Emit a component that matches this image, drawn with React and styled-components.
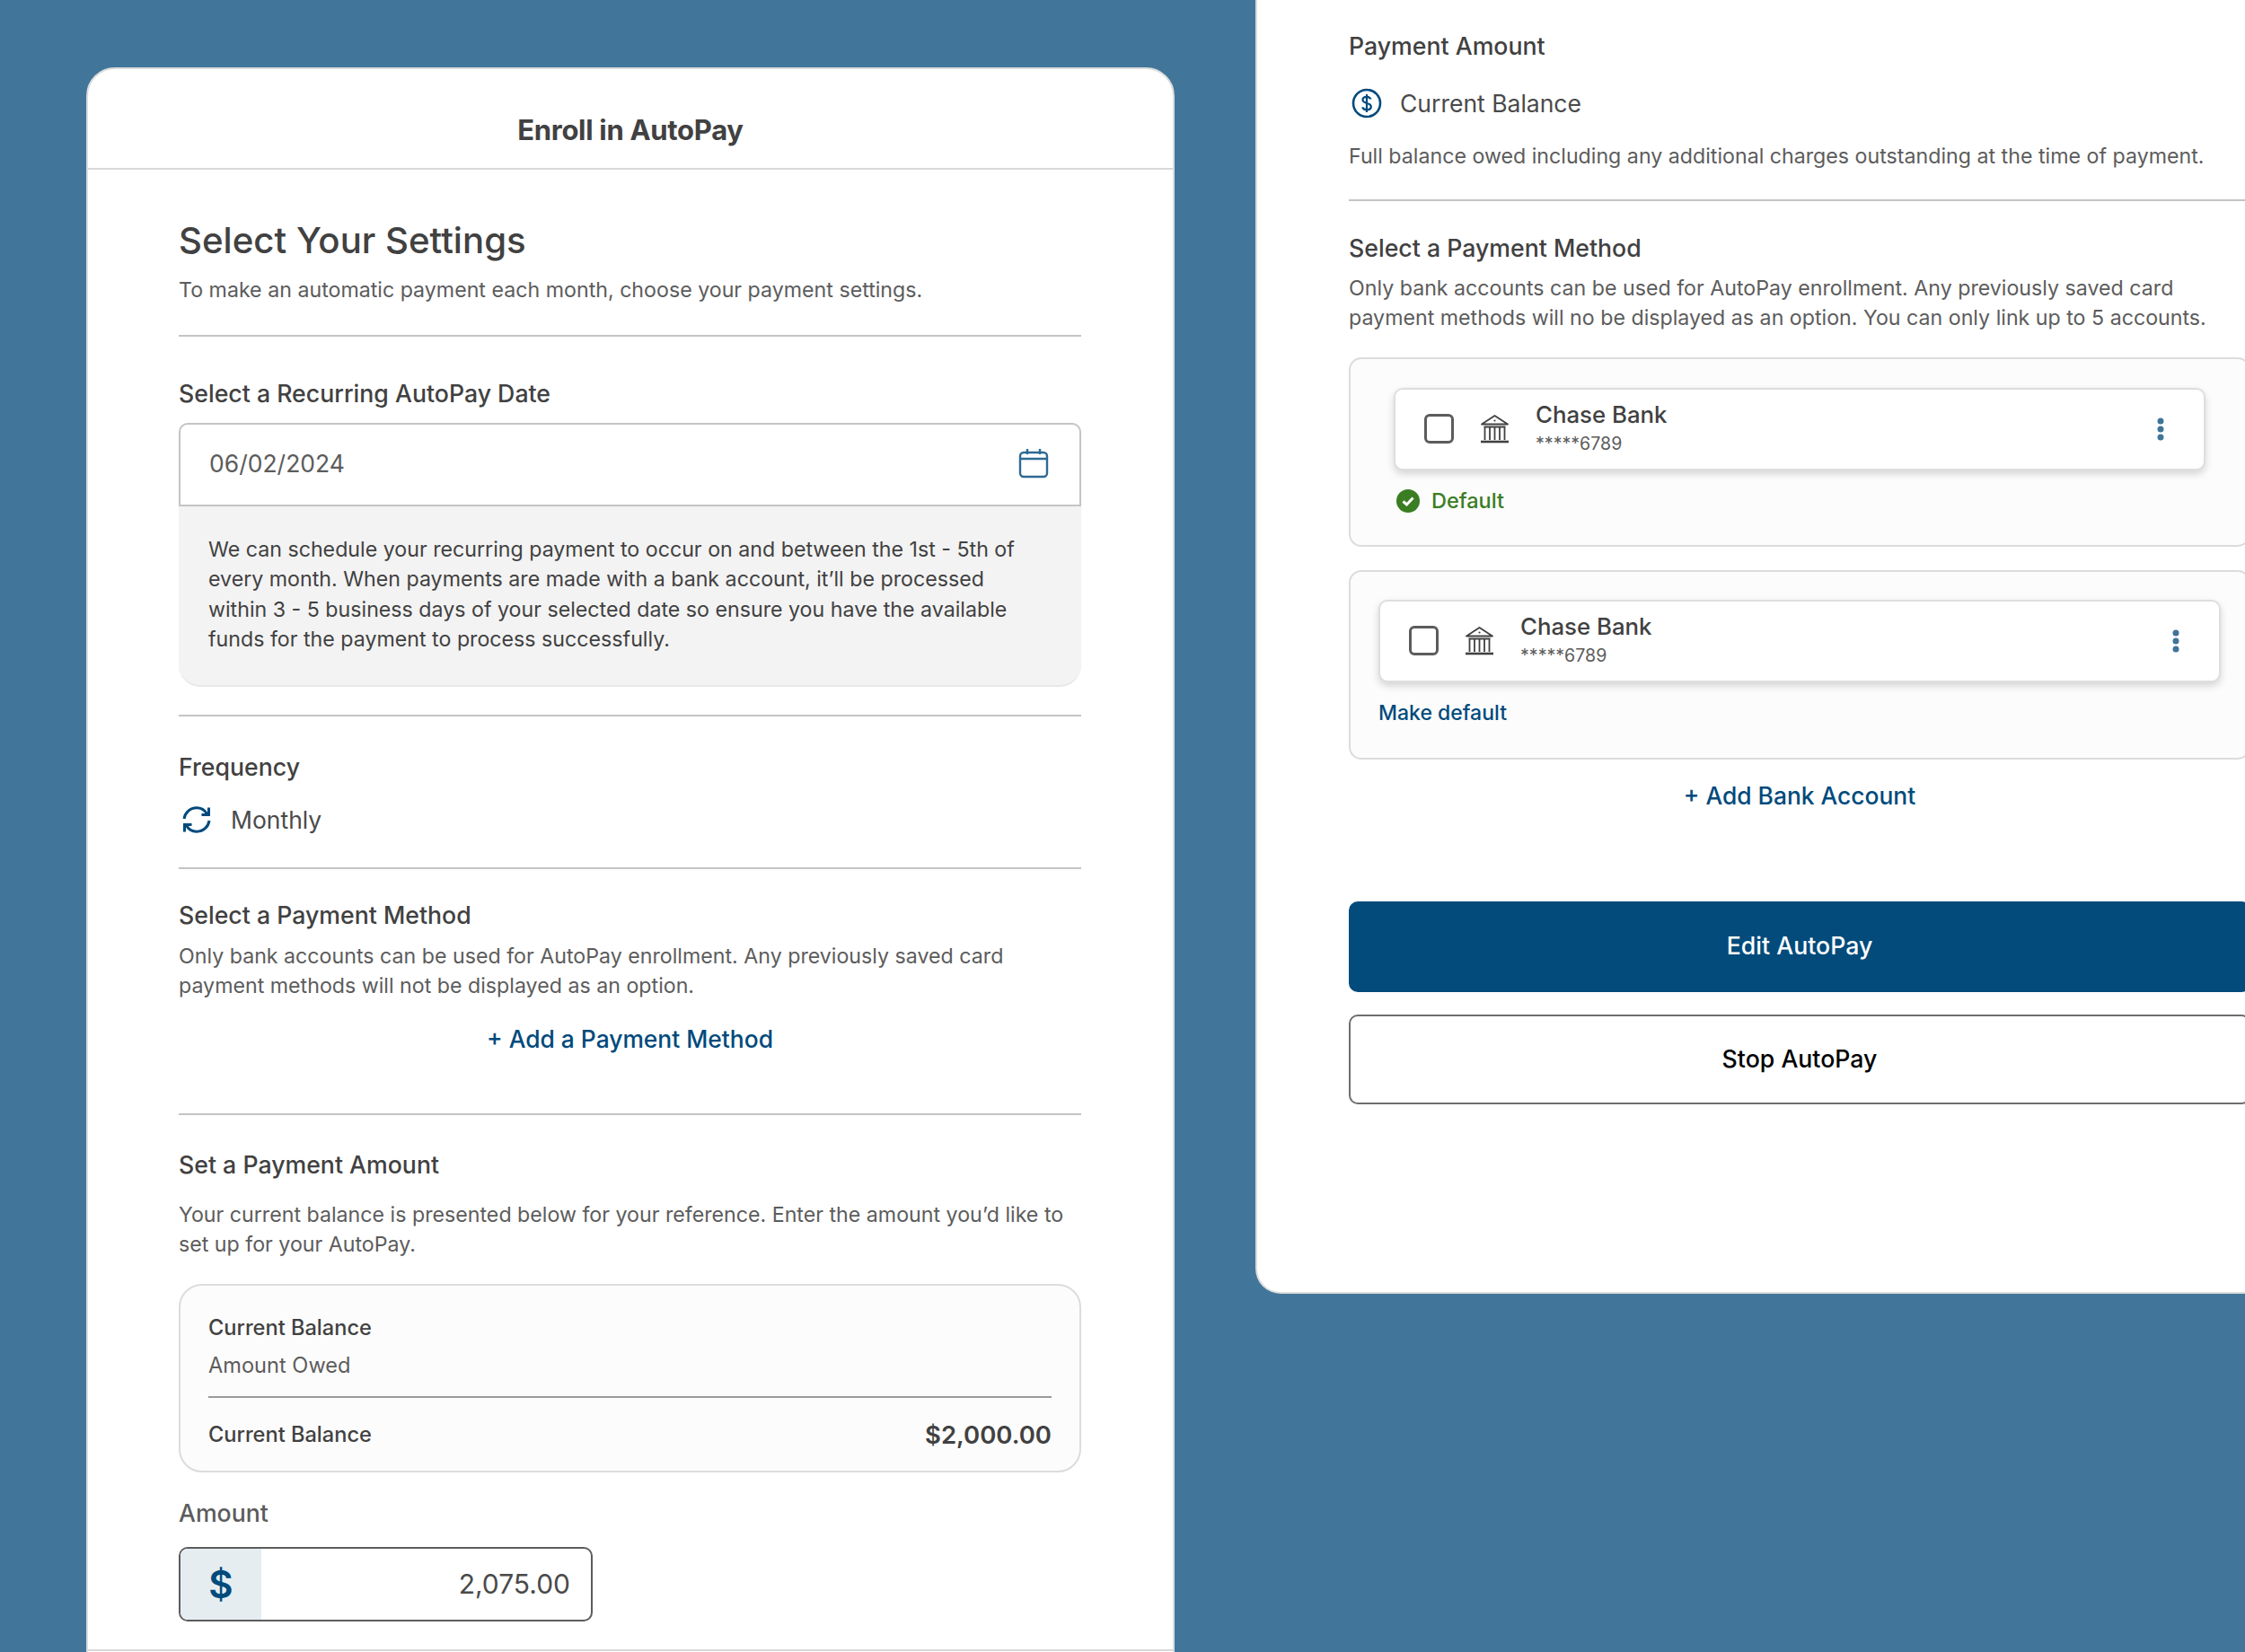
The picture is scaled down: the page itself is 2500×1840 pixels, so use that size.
import React from "react";
import styled, { createGlobalStyle } from "styled-components";

const GlobalStyle = createGlobalStyle`
  html, body {
    margin: 0;
    padding: 0;
    background: #41769a;
  }
  * {
    box-sizing: border-box;
  }
`;

const Page = styled.div`
  display: flex;
  align-items: flex-start;
  width: 2500px;
  height: 1840px;
  padding-left: 96px;
  overflow: hidden;
  background: #41769a;
  font-family: Inter, "Liberation Sans", sans-serif;
  color: #414141;
`;

const Card = styled.section`
  flex: none;
  width: 1212px;
  height: 1900px;
  margin-top: 75px;
  background: #fff;
  border: 2px solid #dcdcdc;
  border-radius: 32px 32px 0 0;
`;

const CardHeader = styled.header`
  display: flex;
  align-items: center;
  justify-content: center;
  height: 112px;
  padding-top: 24px;
  border-bottom: 2px solid #d8d8d8;
  font-size: 31px;
  font-weight: 700;
  letter-spacing: -0.3px;
`;

const CardBody = styled.div`
  padding: 53px 102px 0 101px;
`;

const Heading = styled.h1`
  margin: 0;
  font-size: 40.2px;
  line-height: 52px;
  font-weight: 500;
`;

const Label = styled.h2`
  margin: ${(p) => p.$top || 0}px 0 0;
  padding-bottom: 1px;
  font-size: 26.7px;
  line-height: 33px;
  font-weight: 500;
`;

const Body = styled.p`
  margin: ${(p) => p.$top || 0}px 0 0;
  font-size: 23.2px;
  line-height: 33.5px;
  color: #5c5c5c;
`;

const Rule = styled.hr`
  height: 2px;
  margin: ${(p) => p.$top || 0}px 0 0;
  border: 0;
  background: #c4c4c4;
`;

const FooterRule = styled(Rule)`
  margin-left: -101px;
  margin-right: -102px;
  background: #d8d8d8;
`;

const DateField = styled.div`
  display: flex;
  align-items: center;
  justify-content: space-between;
  height: 93px;
  margin-top: 15px;
  padding: 0 34px 2px 32px;
  border: 2px solid #c4c4c4;
  border-radius: 10px 10px 0 0;
  font-size: 26.5px;
  color: #5c5c5c;
`;

const Hint = styled.div`
  height: 201px;
  padding: 32px 60px 0 33px;
  background: #f3f3f3;
  border-radius: 0 0 24px 24px;
  border-bottom: 2px solid #e8e8e8;
  font-size: 23.2px;
  line-height: 33.5px;
  color: #414141;
`;

const IconRow = styled.div`
  display: flex;
  align-items: center;
  gap: ${(p) => p.$gap}px;
  height: 36px;
  margin-top: ${(p) => p.$top || 0}px;
  padding-left: ${(p) => p.$inset}px;
  font-size: 26.5px;
  color: #4a4a4a;
`;

const TextLink = styled.a`
  display: block;
  margin-top: ${(p) => p.$top || 0}px;
  font-size: 26.4px;
  line-height: 36px;
  font-weight: 500;
  text-align: center;
  color: #004a7c;
`;

const BalanceBox = styled.div`
  height: 210px;
  margin-top: 26px;
  padding: 32px 31px 0;
  background: #fcfcfc;
  border: 2px solid #dcdcdc;
  border-radius: 26px;
`;

const BalanceRow = styled.div`
  display: flex;
  align-items: center;
  justify-content: space-between;
  height: 30px;
  margin-top: ${(p) => p.$top || 0}px;
  font-size: 23.6px;
  font-weight: ${(p) => (p.$muted ? 400 : 500)};
  color: ${(p) => (p.$muted ? "#5c5c5c" : "#414141")};
`;

const BalanceValue = styled.span`
  font-size: 27.5px;
  font-weight: 600;
`;

const BalanceRule = styled(Rule)`
  background: #9a9a9a;
`;

const AmountLabel = styled(Label)`
  color: #5c5c5c;
`;

const AmountField = styled.div`
  display: flex;
  width: 461px;
  height: 83px;
  margin-top: 20px;
  overflow: hidden;
  border: 2px solid #5c5c5c;
  border-radius: 10px;
`;

const AmountPrefix = styled.span`
  display: flex;
  align-items: center;
  justify-content: center;
  flex: none;
  width: 90px;
  background: #e5edf1;
  font-size: 42px;
  font-weight: 600;
  color: #004a7c;
`;

const AmountValue = styled.span`
  display: flex;
  align-items: center;
  justify-content: flex-end;
  flex: 1;
  padding-right: 23px;
  font-size: 30px;
  color: #4a4a4a;
`;

const Panel = styled.section`
  flex: none;
  width: 1220px;
  height: 1441px;
  margin-left: 90px;
  padding: 35px 0 0 102px;
  background: #fff;
  border-left: 2px solid #dcdcdc;
  border-bottom: 2px solid #dcdcdc;
  border-bottom-left-radius: 28px;
`;

const PanelInner = styled.div`
  width: 1004px;
`;

const AccountBox = styled.div`
  height: 211px;
  margin-top: ${(p) => p.$top}px;
  padding: ${(p) => p.$topPad}px ${(p) => p.$inset}px 0;
  background: #fcfcfc;
  border: 2px solid #dcdcdc;
  border-radius: 14px;
`;

const AccountCard = styled.div`
  display: flex;
  align-items: center;
  height: 92px;
  padding: 0 44px 0 32px;
  background: #fff;
  border: 2px solid #dedede;
  border-radius: 10px;
  box-shadow: 0 4px 8px rgba(0, 0, 0, 0.16);
`;

const Checkbox = styled.span`
  flex: none;
  width: 33px;
  height: 33px;
  border: 3px solid #5c5c5c;
  border-radius: 6px;
`;

const BankLogo = styled.svg`
  flex: none;
  margin-left: 29px;
`;

const BankInfo = styled.div`
  flex: 1;
  margin-left: 29px;
  padding-bottom: 3px;
`;

const BankName = styled.div`
  font-size: 25.8px;
  line-height: 34px;
  font-weight: 500;
  color: #414141;
`;

const BankNumber = styled.div`
  margin-top: 1px;
  font-size: 19.6px;
  line-height: 28px;
  color: #5c5c5c;
`;

const DefaultTag = styled.div`
  display: flex;
  align-items: center;
  gap: 13px;
  margin: 21px 0 0 3px;
  font-size: 23.5px;
  line-height: 26px;
  font-weight: 500;
  color: #3a7d23;
`;

const MakeDefault = styled.a`
  display: block;
  margin-top: 21px;
  font-size: 23px;
  line-height: 26px;
  font-weight: 500;
  color: #004a7c;
`;

const Button = styled.button`
  display: block;
  width: 100%;
  height: ${(p) => p.$height}px;
  margin-top: ${(p) => p.$top}px;
  padding: 0 0 2px;
  background: ${(p) => (p.$primary ? "#024b7b" : "#fff")};
  border: ${(p) => (p.$primary ? "0" : "2px solid #6e6e6e")};
  border-radius: 10px;
  font-family: inherit;
  font-size: 26.7px;
  font-weight: 500;
  color: ${(p) => (p.$primary ? "#fff" : "#000")};
`;

const CalendarIcon = () => (
  <svg width="34" height="34" viewBox="0 0 34 34" fill="none" stroke="#2f6a94" strokeWidth="2.4">
    <rect x="2" y="5" width="30" height="27" rx="4" />
    <path d="M2 12h30M10 1v6M24 1v6" />
  </svg>
);

const RefreshIcon = () => (
  <svg width="32" height="30" viewBox="0 0 32 30" fill="none" stroke="#004a7c" strokeWidth="3">
    <path d="M2 14C3 7 8.5 1.8 16 1.8c5 0 9 2.500 11.500 6.700" />
    <path d="M29.500 1.500v8h-8" />
    <path d="M30 16c-1 7-6.500 12.200-14 12.200-5 0-9-2.500-11.500-6.700" />
    <path d="M2.500 28.500v-8h8" />
  </svg>
);

const DollarIcon = () => (
  <svg width="34" height="34" viewBox="0 0 34 34" fill="none" stroke="#004a7c" strokeWidth="2.6">
    <circle cx="17" cy="17" r="15" />
    <path d="M21.500 12.500c-.6-1.700-2.400-2.700-4.500-2.700-2.600 0-4.500 1.400-4.500 3.500 0 4.700 9.300 2.600 9.300 7.400 0 2.100-2 3.500-4.800 3.500-2.300 0-4.200-1-4.800-2.900M17 7v20" strokeWidth="2.200" />
  </svg>
);

const BankIcon = () => (
  <BankLogo width="33" height="33" viewBox="0 0 33 33" fill="none" stroke="#414141" strokeWidth="1.8">
    <path d="M2 11.500L16.500 2 31 11.500H2z" strokeLinejoin="round" />
    <circle cx="16.500" cy="7.500" r="1.100" fill="#414141" stroke="none" />
    <path d="M4.500 14.500h24M5.500 14.500V29M11 14.500V29M16.500 14.500V29M22 14.500V29M27.500 14.500V29" />
    <path d="M1 31h31" strokeWidth="2.600" />
  </BankLogo>
);

const KebabIcon = () => (
  <svg width="8" height="26" viewBox="0 0 8 26" fill="#3f749a">
    <circle cx="4" cy="4" r="3.500" />
    <circle cx="4" cy="13" r="3.500" />
    <circle cx="4" cy="22" r="3.500" />
  </svg>
);

const CheckIcon = () => (
  <svg width="26" height="26" viewBox="0 0 26 26">
    <circle cx="13" cy="13" r="13" fill="#3a7d23" />
    <path d="M7.500 13.500l4 3.500 7-7.500" fill="none" stroke="#fff" strokeWidth="3" />
  </svg>
);

const Account = () => (
  <AccountCard>
    <Checkbox />
    <BankIcon />
    <BankInfo>
      <BankName>Chase Bank</BankName>
      <BankNumber>*****6789</BankNumber>
    </BankInfo>
    <KebabIcon />
  </AccountCard>
);

const App = () => (
  <Page>
    <GlobalStyle />
    <Card>
      <CardHeader>Enroll in AutoPay</CardHeader>
      <CardBody>
        <Heading>Select Your Settings</Heading>
        <Body $top={13}>To make an automatic payment each month, choose your payment settings.</Body>
        <Rule $top={32} />

        <Label $top={47}>Select a Recurring AutoPay Date</Label>
        <DateField>
          06/02/2024
          <CalendarIcon />
        </DateField>
        <Hint>
          We can schedule your recurring payment to occur on and between the 1st - 5th of every month. When payments are
          made with a bank account, it’ll be processed within 3 - 5 business days of your selected date so ensure you
          have the available funds for the payment to process successfully.
        </Hint>
        <Rule $top={31} />

        <Label $top={40}>Frequency</Label>
        <IconRow $top={23} $inset={4} $gap={22}>
          <RefreshIcon />
          Monthly
        </IconRow>
        <Rule $top={35} />

        <Label $top={35}>Select a Payment Method</Label>
        <Body $top={12}>
          Only bank accounts can be used for AutoPay enrollment. Any previously saved card payment methods will not be
          displayed as an option.
        </Body>
        <TextLink $top={23}>+ Add a Payment Method</TextLink>
        <Rule $top={65} />

        <Label $top={39}>Set a Payment Amount</Label>
        <Body $top={22}>
          Your current balance is presented below for your reference. Enter the amount you’d like to set up for your
          AutoPay.
        </Body>
        <BalanceBox>
          <BalanceRow>Current Balance</BalanceRow>
          <BalanceRow $top={12} $muted>
            Amount Owed
          </BalanceRow>
          <BalanceRule $top={19} />
          <BalanceRow $top={26}>
            Current Balance
            <BalanceValue>$2,000.00</BalanceValue>
          </BalanceRow>
        </BalanceBox>
        <AmountLabel $top={29}>Amount</AmountLabel>
        <AmountField>
          <AmountPrefix>$</AmountPrefix>
          <AmountValue>2,075.00</AmountValue>
        </AmountField>
        <FooterRule $top={31} />
      </CardBody>
    </Card>

    <Panel>
      <PanelInner>
        <Label>Payment Amount</Label>
        <IconRow $top={28} $inset={3} $gap={20}>
          <DollarIcon />
          Current Balance
        </IconRow>
        <Body $top={25}>Full balance owed including any additional charges outstanding at the time of payment.</Body>
        <Rule $top={30} />

        <Label $top={36}>Select a Payment Method</Label>
        <Body $top={11}>
          Only bank accounts can be used for AutoPay enrollment. Any previously saved card payment methods will no be
          displayed as an option. You can only link up to 5 accounts.
        </Body>

        <AccountBox $top={26} $topPad={32} $inset={48}>
          <Account />
          <DefaultTag>
            <CheckIcon />
            Default
          </DefaultTag>
        </AccountBox>
        <AccountBox $top={26} $topPad={31} $inset={31}>
          <Account />
          <MakeDefault>Make default</MakeDefault>
        </AccountBox>

        <TextLink $top={22}>+ Add Bank Account</TextLink>
        <Button $primary $top={100} $height={101}>
          Edit AutoPay
        </Button>
        <Button $top={25} $height={100}>
          Stop AutoPay
        </Button>
      </PanelInner>
    </Panel>
  </Page>
);

export default App;
